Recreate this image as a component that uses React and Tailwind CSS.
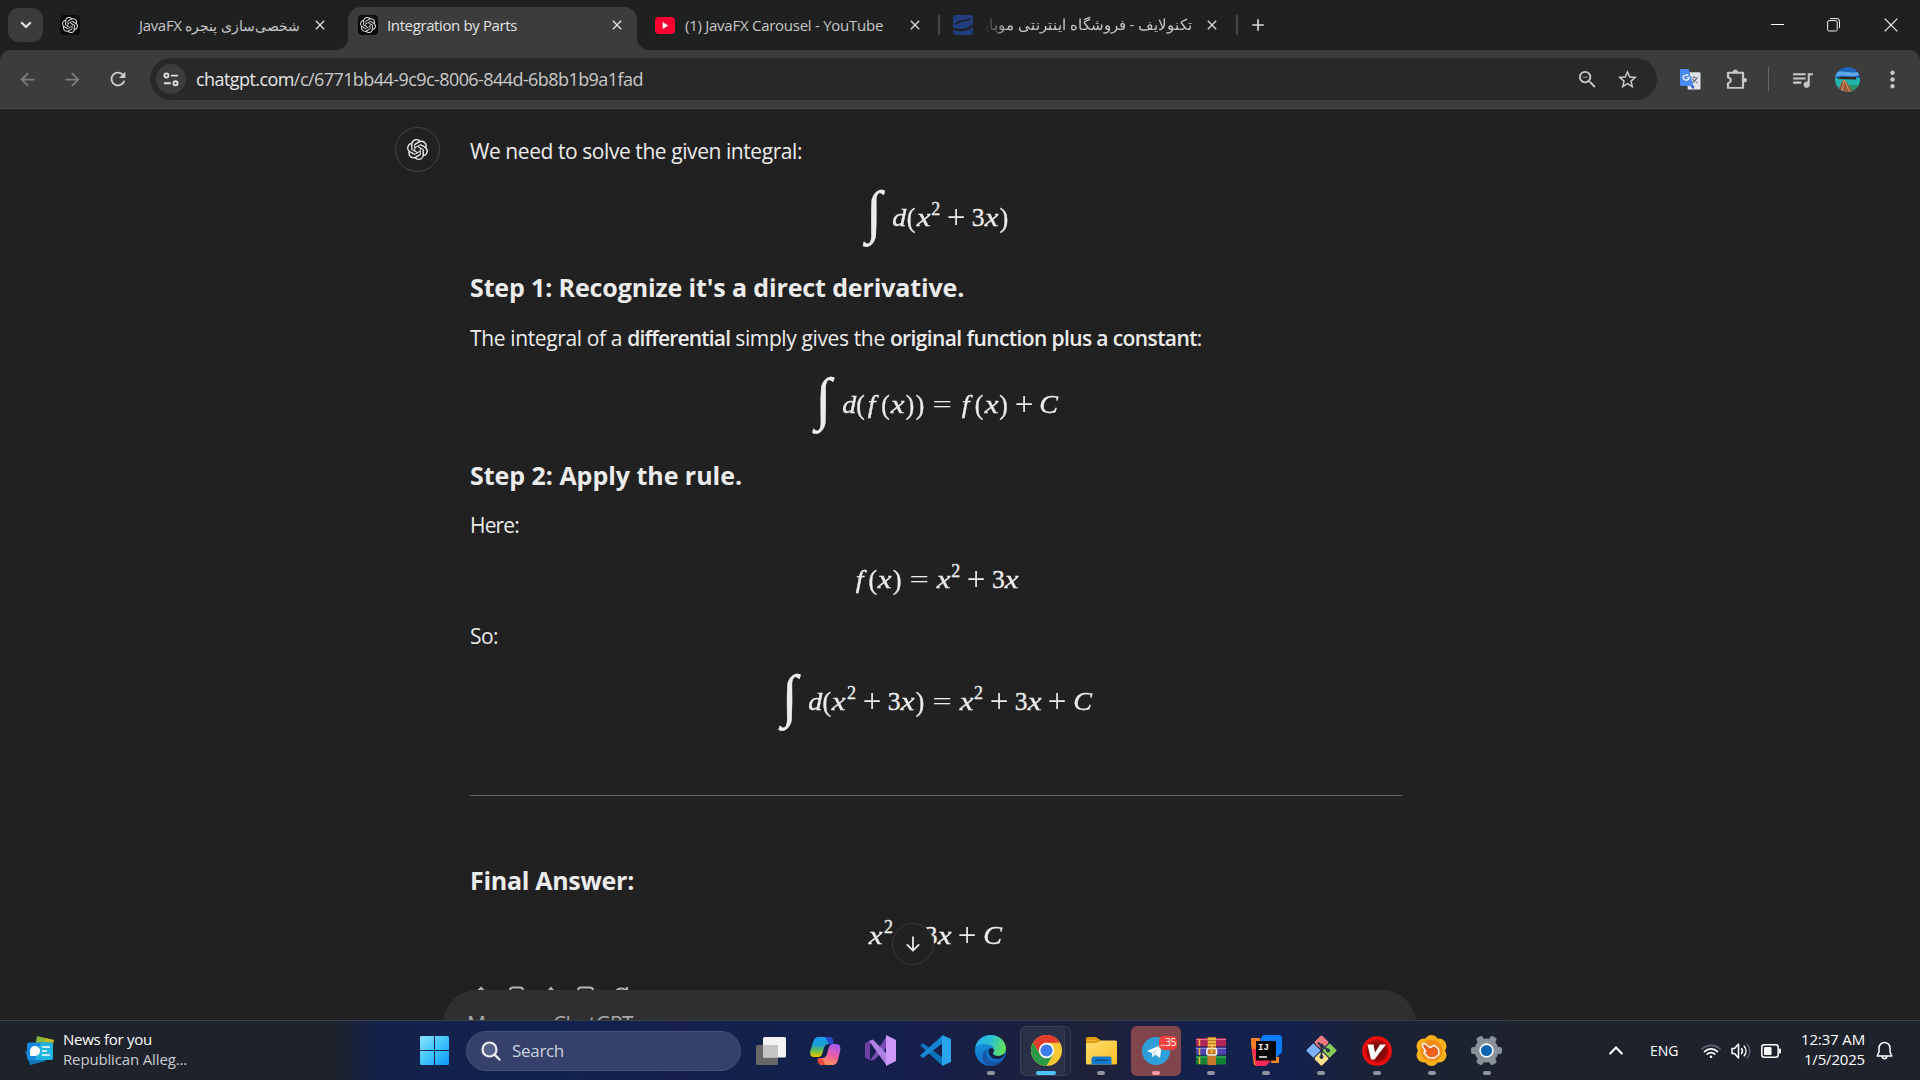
import React from 'react';
import { SiOpenai } from 'react-icons/si';
import {
  MdZoomOut, MdStarOutline, MdQueueMusic, MdMoreVert,
  MdClose, MdAdd, MdArrowBack, MdArrowForward, MdRefresh,
} from 'react-icons/md';

/* ---------- Math typesetting ---------- */

const GLYPHS = {
  int: { ch: '∫', box: 'w-[29.8px]', cls: 'italic text-[58px] relative -top-[6px] -left-[4px]' },
  d: { ch: 'd', box: 'w-[13.3px]', cls: 'italic scale-x-110' },
  x: { ch: 'x', box: 'w-[14.6px]', cls: 'italic scale-x-[1.22]' },
  f: { ch: 'f', box: 'w-[15.2px]', cls: 'italic scale-x-110 relative -left-[1px]' },
  C: { ch: 'C', box: 'w-[20px]', cls: 'italic scale-x-110 relative -left-[1px]' },
  '(': { ch: '(', box: 'w-[9.9px]', cls: 'scale-y-110' },
  ')': { ch: ')', box: 'w-[9.9px]', cls: 'scale-y-110' },
  3: { ch: '3', box: 'w-[12.75px]', cls: '' },
  '+': { ch: '+', box: 'w-[31.1px]', cls: 'scale-[1.3] [-webkit-text-stroke:0]' },
  '=': { ch: '=', box: 'w-[34px]', cls: 'scale-x-[1.35] [-webkit-text-stroke:0]' },
  sq: { ch: '2', box: 'w-[10.2px]', cls: 'text-[18px] relative -top-[9px]' },
};

function Formula({ tokens, className }) {
  return (
    <div className={`flex w-full items-center justify-center font-['Liberation_Serif',serif] text-[25.5px] leading-none [-webkit-text-stroke:0.35px_#ececec] ${className}`}>
      {tokens.split(' ').map((t, i) => (
        <span key={i} className={`flex h-8 items-center justify-center ${GLYPHS[t].box}`}>
          <span className={`block ${GLYPHS[t].cls}`}>{GLYPHS[t].ch}</span>
        </span>
      ))}
    </div>
  );
}

/* ---------- Tab strip ---------- */

function GptFavicon() {
  return (
    <span className="flex h-5 w-5 shrink-0 items-center justify-center rounded-[4px] bg-[#0b0b0b] text-[#d6d6d6]">
      <SiOpenai size={16} />
    </span>
  );
}

function TabStrip() {
  return (
    <div className="flex h-[50px] items-end bg-[#1f2120] text-[15px] text-[#c7c7c7]">
      <div className="flex h-[50px] w-[348px] items-center pl-2">
        <button className="flex h-[34px] w-[35px] items-center justify-center rounded-[11px] bg-[#3a3b3a]">
          <svg width="12" height="8" viewBox="0 0 12 8" fill="none" stroke="#e6e6e6" strokeWidth="2.2"><path d="M1.2 1.3 6 6l4.8-4.7" /></svg>
        </button>
        <span className="ml-[17px]"><GptFavicon /></span>
        <span dir="rtl" className="ml-[26px] w-[194px] whitespace-nowrap text-[14px]">شخصی‌سازی پنجره <span className="text-[15px] tracking-[-0.3px]">JavaFX</span></span>
        <MdClose className="ml-[12px] text-[#d8d8d8]" size={16} />
      </div>
      <div className="relative flex h-[43px] w-[289px] items-center rounded-t-[13px] bg-[#3c3c3c] pb-[7px] pl-[10px] text-[#e3e3e3]">
        <svg className="absolute bottom-0 -left-3" width="12" height="12"><path d="M12 0v12H0A12 12 0 0 0 12 0Z" fill="#3c3c3c" /></svg>
        <svg className="absolute bottom-0 -right-3" width="12" height="12"><path d="M0 0v12h12A12 12 0 0 1 0 0Z" fill="#3c3c3c" /></svg>
        <GptFavicon />
        <span className="ml-[9px] w-[222px] whitespace-nowrap tracking-[-0.38px]">Integration by Parts</span>
        <MdClose size={16} />
      </div>
      <div className="flex h-[50px] flex-1 items-center pl-[18px]">
        <svg width="20" height="17" viewBox="0 0 20 17"><rect width="20" height="17" rx="4" fill="#ff0033" /><path d="M7.7 5v7l5.6-3.5Z" fill="#fff" /></svg>
        <span className="ml-[10px] w-[222px] whitespace-nowrap tracking-[-0.26px]">(1) JavaFX Carousel - YouTube</span>
        <MdClose size={16} className="text-[#d8d8d8]" />
        <span className="ml-[15px] h-5 w-[2px] bg-[#454645]" />
        <svg className="ml-[13px]" width="20" height="20" viewBox="0 0 20 20">
          <rect width="20" height="20" rx="3" fill="#213d7d" />
          <path d="M3.5 8.8C5 5.6 10 6.6 17 4" fill="none" stroke="#1f2120" strokeWidth="1.8" />
          <path d="M0 13.5c6 2.8 14 2.4 20-3.2" fill="none" stroke="#1f2120" strokeWidth="2.2" />
        </svg>
        <span dir="rtl" className="ml-[11px] w-[208px] overflow-hidden whitespace-nowrap text-[14.5px] [mask-image:linear-gradient(to_right,transparent,black_24px)]">تکنولایف - فروشگاه اینترنتی موبایل</span>
        <MdClose size={16} className="ml-[12px] text-[#d8d8d8]" />
        <span className="ml-[16px] h-5 w-[2px] bg-[#454645]" />
        <MdAdd size={20} className="ml-[10px] text-[#d8d8d8]" />
        <div className="ml-auto flex items-center pr-[22px] text-white">
          <svg width="13" height="14"><path d="M0 6.5h13" stroke="#fff" /></svg>
          <svg className="ml-[43px]" width="13" height="14" viewBox="0 0 13 14" fill="none" stroke="#f2f2f2"><rect x=".6" y="2.6" width="9.6" height="10.4" rx="1.6" /><path d="M3 .6h7a2.5 2.5 0 0 1 2.5 2.5V10" /></svg>
          <svg className="ml-[44px]" width="14" height="14" viewBox="0 0 14 14" stroke="#f2f2f2" strokeWidth="1.2"><path d="m.7.7 12.6 12.6M13.3.7.7 13.3" /></svg>
        </div>
      </div>
    </div>
  );
}

/* ---------- Address bar ---------- */

function Toolbar() {
  return (
    <div className="bg-[#1f2120]">
      <div className="flex h-[59px] items-center rounded-t-[10px] border-b border-[#4a4a4a] bg-[#3c3c3c] text-[#c7c7c7]">
        <MdArrowBack size={21} className="ml-[17px] text-[#7d7d7d]" />
        <MdArrowForward size={21} className="ml-[24px] text-[#7d7d7d]" />
        <MdRefresh size={22} className="ml-[24px] text-[#d0d0d0]" />
        <div className="ml-[21px] flex h-[42px] w-[1507px] items-center rounded-full bg-[#282828] pl-[6px]">
          <span className="flex h-[30px] w-[30px] items-center justify-center rounded-full bg-[#3c3c3c]">
            <svg width="16" height="15" viewBox="0 0 17 16" fill="none" stroke="#dedede" strokeWidth="2"><circle cx="3.6" cy="3.8" r="2.2" /><path d="M8.5 3.8H16M1 12h7.2" /><circle cx="13.3" cy="12" r="2.2" /></svg>
          </span>
          <span className="ml-[10px] flex-1 text-[18px] tracking-[-0.57px] text-[#c9c9c9]"><span className="text-[#e8e8e8]">chatgpt.com</span>/c/6771bb44-9c9c-8006-844d-6b8b1b9a1fad</span>
          <MdZoomOut size={23} />
          <MdStarOutline size={23} className="mr-[18px] ml-[17px]" />
        </div>
        <svg className="ml-[23px]" width="21" height="21" viewBox="0 0 22 26" preserveAspectRatio="none">
          <rect x="8" y="4" width="13.500" height="21.500" rx="1.5" fill="#dfe3e8" />
          <path d="M11.5 11h7M15 9v2M17.5 11c-.7 3-2.8 5-5 6M13 12.500c1 2 3 3.500 5 4.500" fill="none" stroke="#5f6b78" strokeWidth="1.2" />
          <path d="M1.5 0H9l5 21H1.500A1.500 1.500 0 0 1 0 19.500v-18A1.500 1.500 0 0 1 1.500 0Z" fill="#4a8af4" />
          <path d="m11 21 3 4 1-4Z" fill="#2d50c8" />
          <path d="M8.800 8.300a3.200 3.200 0 1 0 .9 2.500H6.800" fill="none" stroke="#fff" strokeWidth="1.400" />
        </svg>
        <svg className="ml-[25px]" width="21" height="21" viewBox="0 0 21 25" preserveAspectRatio="none" fill="none" stroke="#c7c7c7" strokeWidth="2.200" strokeLinejoin="round"><path d="M2 4.500h15v18H2V17c3.600-.8 3.600-6.200 0-7Z" /><path d="M7 3.500a2.300 2.300 0 0 1 4.600 0ZM18.500 11a2 2 0 0 1 0 4.500Z" fill="#c7c7c7" strokeWidth="1" /></svg>
        <span className="ml-[21px] h-6 w-px bg-[#666]" />
        <MdQueueMusic size={25} className="ml-[21px]" />
        <svg className="ml-[20px]" width="25" height="25" viewBox="0 0 25 25">
          <defs><clipPath id="av"><circle cx="12.500" cy="12.500" r="12.500" /></clipPath></defs>
          <g clipPath="url(#av)">
            <rect width="25" height="12" fill="#1d63b8" />
            <path d="M0 6c8-4 16 2 25-2v4C16 11 8 7 0 10Z" fill="#5ba6e6" />
            <rect y="11" width="25" height="14" fill="#22b3ad" />
            <path d="M13 18h12v7H13Z" fill="#2e8f68" />
            <path d="M2 12c3-2 6-2.500 9-2h10v2.500Z" fill="#33281f" />
            <path d="M8 13 2 25h16L10 13Z" fill="#9a5a35" />
            <path d="m9 13-2 12M9.500 13l5 12" stroke="#e0b48c" strokeWidth=".7" />
          </g>
        </svg>
        <MdMoreVert size={27} className="ml-[19px]" />
      </div>
    </div>
  );
}

/* ---------- Conversation ---------- */

const BODY = 'whitespace-nowrap text-[21px] leading-7';
const HEAD = 'whitespace-nowrap text-[25px] font-bold leading-8';

function Conversation() {
  return (
    <main className="relative h-[911px] overflow-hidden bg-[#212121] text-[#ececec]">
      <div className="flex pt-[18px] pl-[395px]">
        <div className="flex h-[45px] w-[45px] shrink-0 items-center justify-center rounded-full border border-[#424242] pr-px">
          <SiOpenai size={21} />
        </div>
        <div className="ml-[30px] flex w-[932px] flex-col pt-[10px]">
          <p className={`${BODY} tracking-[-0.43px]`}>We need to solve the given integral:</p>
          <Formula className="mt-[25px] h-14" tokens="int d ( x sq + 3 x )" />
          <h3 className={`${HEAD} mt-[25px] tracking-[-0.13px]`}>Step 1: Recognize it's a direct derivative.</h3>
          <p className={`${BODY} mt-[21px] tracking-[-0.37px]`}>
            The integral of a <b className="font-semibold tracking-[-0.83px]">differential</b> simply gives the <b className="font-semibold tracking-[-0.61px]">original function plus a constant</b>:
          </p>
          <Formula className="mt-[25px] h-14" tokens="int d ( f ( x ) ) = f ( x ) + C" />
          <h3 className={`${HEAD} mt-[26px] tracking-[-0.03px]`}>Step 2: Apply the rule.</h3>
          <p className={`${BODY} mt-[20px] tracking-[-0.83px]`}>Here:</p>
          <Formula className="mt-[25px] h-8" tokens="f ( x ) = x sq + 3 x" />
          <p className={`${BODY} mt-[26px] tracking-[-0.56px]`}>So:</p>
          <Formula className="mt-[24px] h-14" tokens="int d ( x sq + 3 x ) = x sq + 3 x + C" />
          <hr className="mt-[65px] border-[#666]" />
          <h3 className={`${HEAD} mt-[68px] tracking-[-0.29px]`}>Final Answer:</h3>
          <Formula className="mt-[24px] h-8" tokens="x sq + 3 x + C" />
          <div className="mt-[34px] flex gap-[14px] pl-[1px] text-[#b4b4b4]">
            <svg width="20" height="22" viewBox="0 0 20 22" fill="none" stroke="currentColor" strokeWidth="2"><path d="M4 8 10 2l6 6v10H4Z" /></svg>
            <svg width="22" height="22" viewBox="0 0 22 22" fill="none" stroke="currentColor" strokeWidth="2"><rect x="5" y="1.500" width="13" height="16" rx="3" /></svg>
            <svg width="20" height="22" viewBox="0 0 20 22" fill="none" stroke="currentColor" strokeWidth="2"><path d="M4 9 10 2l6 7v9H4Z" /></svg>
            <svg width="22" height="22" viewBox="0 0 22 22" fill="none" stroke="currentColor" strokeWidth="2"><rect x="3" y="1.500" width="15" height="16" rx="3" /></svg>
            <svg width="22" height="22" viewBox="0 0 22 22" fill="none" stroke="currentColor" strokeWidth="2"><path d="M4 7a7 7 0 0 1 12-2V1" /></svg>
          </div>
        </div>
      </div>
      <button className="absolute top-[814px] left-[892px] flex h-[42px] w-[42px] items-center justify-center rounded-full border border-[#383838] bg-[#212121]">
        <svg width="14" height="16" viewBox="0 0 16 18" fill="none" stroke="#ececec" strokeWidth="2" strokeLinecap="round" strokeLinejoin="round"><path d="M8 1v15M1.500 10 8 16.500l6.500-6.500" /></svg>
      </button>
      <div className="absolute top-[881px] left-[443px] h-[60px] w-[973px] rounded-t-[34px] bg-[#2f2f2f] pt-[20px] pl-[24px] text-[21px] leading-7 tracking-[-0.65px] text-[#a8a8a8]">Message ChatGPT</div>
    </main>
  );
}

/* ---------- Taskbar icons ---------- */

const TaskView = () => (
  <svg width="30" height="30" viewBox="0 0 30 30"><rect x="0" y="9" width="22" height="20" rx="1.500" fill="#686868" /><rect x="7" y="1" width="23" height="20.500" rx="1.500" fill="#f4f4f4" /><path d="M7 9h15v12.500H8.500A1.500 1.500 0 0 1 7 20Z" fill="#c4c4c4" /></svg>
);
const Copilot = () => (
  <svg width="31" height="30" viewBox="0 0 31 30">
    <defs>
      <linearGradient id="cp1" x1="0" y1="0" x2="0" y2="1"><stop offset="0" stopColor="#1a9cf0" /><stop offset=".4" stopColor="#1d9fd0" /><stop offset=".7" stopColor="#6cc24a" /><stop offset="1" stopColor="#f5c400" /></linearGradient>
      <linearGradient id="cp2" x1=".6" y1="0" x2=".3" y2="1"><stop offset="0" stopColor="#a85cf2" /><stop offset=".5" stopColor="#ee5ba0" /><stop offset="1" stopColor="#ff9b4a" /></linearGradient>
    </defs>
    <path d="M9 1h10c3 0 3.500 2 4.500 6l-4 1c-4 0-5 2-6 6-1 4-2 7-5 7H4C0 21-.5 18 .6 14L3 6C4 3 5.500 1 9 1Z" fill="url(#cp1)" />
    <path d="M14 1h5.500c3 0 3 2.500 4.500 7h-4c-2.500 0-3-7-6-7Z" fill="#2349c8" />
    <path d="M22 29H12c-3 0-3.500-2-4.500-6l4-1c4 0 5-2 6-6 1-4 2-8 5-8h4c4 0 4.500 4 3.400 8L28 24c-1 3-2.500 5-6 5Z" fill="url(#cp2)" />
    <path d="M17 29h-5c-3 0-3.500-2.500-4.500-6.500H11c3 0 3 6.500 6 6.500Z" fill="#ef4a3c" />
    <path d="M14.500 11.500h4l-2.500 7h-4Z" fill="#14204c" />
  </svg>
);
const VisualStudio = () => (
  <svg width="31" height="31" viewBox="0 0 31 31">
    <path d="M0 8.500 5 5.500v20L0 22.500Z" fill="#6d3fa0" />
    <path d="m5 25.500 4-.5L22 12V1Z" fill="#7b4bb3" />
    <path d="m4 6 4-1.500L22 19v12Z" fill="#ad80e4" />
    <path d="m21 0 10 5v21l-10 5Z" fill="#cf97fa" />
  </svg>
);
const VSCode = () => (
  <svg width="31" height="31" viewBox="0 0 31 31"><path d="M0 10.500 3 8l20 15v8Z" fill="#0b72b9" /><path d="M0 20.500 3 23 23 8V0Z" fill="#1487d0" /><path d="m22 0 9 4v23l-9 4Z" fill="#29a5ee" /></svg>
);
const Edge = () => (
  <svg width="31" height="31" viewBox="0 0 31 31">
    <defs>
      <linearGradient id="eg1" x1="0" y1=".3" x2="1" y2=".5"><stop offset="0" stopColor="#26a9e8" /><stop offset=".5" stopColor="#2bc3d2" /><stop offset="1" stopColor="#66e14d" /></linearGradient>
      <linearGradient id="eg2" x1="0" y1="0" x2=".4" y2="1"><stop offset="0" stopColor="#1ba0e2" /><stop offset="1" stopColor="#0f68c4" /></linearGradient>
    </defs>
    <circle cx="15.500" cy="15.500" r="15.500" fill="url(#eg2)" />
    <path d="M.3 13C1.500 5 8 0 15.500 0 25 0 31 7 31 13.500c0 4.500-3.500 7.500-8 7.500-3 0-5-1-5-2.500 0-1 1-1.500 1-3.500C19 12 15 9 10.500 9 5 9 1 11 .3 13Z" fill="url(#eg1)" />
    <path d="M12.500 14c-3 4-1 13 7 13 4 0 7-2 9-4-3 5-8 8-13 8-5-1-9-6-8-11 .5-3 3-5 5-6Z" fill="#1456a4" />
    <path d="M19 15c0 2-1 2.500-1 3.500 0 1.500 2 2.500 5 2.500 3 0 5-1 7-3-1 4-4 6-8 6-6 0-10-5-8-10 1-1 5-1 5 1Z" fill="#182043" />
  </svg>
);
const Chrome = () => (
  <svg width="31" height="31" viewBox="0 0 31 31">
    <circle cx="15.500" cy="15.500" r="15.500" fill="#fcc934" />
    <path d="M15.500 0A15.500 15.500 0 0 1 28.900 7.700H15.500L9 19.500 2 7.800A15.500 15.500 0 0 1 15.500 0Z" fill="#e33b2e" />
    <path d="M2.100 7.750A15.500 15.500 0 0 0 15.500 31l6.700-11.600H9Z" fill="#2a9a48" />
    <circle cx="15.500" cy="15.500" r="7.700" fill="#fff" /><circle cx="15.500" cy="15.500" r="6.100" fill="#3b7ded" />
  </svg>
);
const Explorer = () => (
  <svg width="31" height="29" viewBox="0 0 31 29">
    <defs><linearGradient id="fx" x1="0" y1="0" x2="1" y2="1"><stop offset="0" stopColor="#ffdd70" /><stop offset="1" stopColor="#fbbf26" /></linearGradient></defs>
    <path d="M0 3a2 2 0 0 1 2-2h8l4 3v6H0Z" fill="#e09d0c" /><rect y="4.500" width="31" height="24" rx="1.500" fill="url(#fx)" /><path d="M0 6h10l4-2" fill="none" stroke="#e09d0c" strokeWidth="2" />
    <path d="M5.500 28.500V23a2.500 2.500 0 0 1 2.500-2.500h15a2.500 2.500 0 0 1 2.500 2.500v5.500Z" fill="#1379cd" /><path d="M9 24.300h13" stroke="#0c4a83" strokeWidth="1.300" />
  </svg>
);
const Telegram = () => (
  <div className="relative flex h-[50px] w-[50px] items-center justify-center rounded-[6px] bg-[#80464c]">
    <svg width="28" height="28" viewBox="0 0 28 28"><circle cx="14" cy="14" r="14" fill="#2f9fd9" /><path d="m5 14 15-6.500L18 21l-5-3.500-2.500 3-.6-4.500Z" fill="#fff" /><path d="m10 16 7-5.500-5 6.500" fill="#b9d8ea" /></svg>
    <span className="absolute top-[10px] right-[4px] flex h-[14px] w-[18px] items-center justify-center rounded-[5px] bg-[#f4403c] text-[10.500px] leading-none tracking-[-0.4px] text-white">..35</span>
  </div>
);
const WinRar = () => (
  <svg width="30" height="28" viewBox="0 0 30 28">
    <rect y="1" width="30" height="9" rx="1" fill="#b3265a" /><rect y="10" width="30" height="8.500" rx="1" fill="#4d44ae" /><rect y="18.500" width="30" height="9" rx="1" fill="#138036" />
    <path d="M0 2.500h30" stroke="#dc6f94" /><path d="M0 11.500h30" stroke="#8f88dd" /><path d="M0 20h30" stroke="#3fb964" />
    <path d="M0 9.800h30M0 18.200h30" stroke="#1c2348" strokeWidth=".8" />
    <path d="M3.500 2v7M3.500 11v7M3.500 20v7" stroke="#e8bd3a" strokeWidth="1.500" />
    <rect x="11.500" y="0" width="8.500" height="28" fill="#c7792a" /><path d="M12 2h8M12 5h8M12 8h8" stroke="#f4cd52" strokeWidth="1.500" />
    <rect x="11" y="11.500" width="9.500" height="6.500" rx="1.500" fill="none" stroke="#ececec" strokeWidth="1.700" /><path d="M15.700 9v7" stroke="#f4cd52" strokeWidth="1.500" />
  </svg>
);
const IntelliJ = () => (
  <svg width="31" height="31" viewBox="0 0 31 31">
    <path d="M0 3h9v12L7 31l-4-1L0 9Z" fill="#fb7e27" /><path d="M12 0h16a3 3 0 0 1 3 3v14l-5 5H9V5Z" fill="#087cfa" /><path d="M1 14h10l10 10-6 7H5Z" fill="#fe2857" /><path d="M21 22h7v6h-8Z" fill="#fd8a22" />
    <rect x="5" y="6" width="20" height="19.500" fill="#000" />
    <text x="7" y="15" fill="#fff" fontSize="9" fontWeight="700" fontFamily="Liberation Mono, monospace">IJ</text><path d="M8 22h8" stroke="#fff" strokeWidth="1.500" />
  </svg>
);
const Git = () => (
  <svg width="31" height="31" viewBox="0 0 31 31">
    <g transform="rotate(45 15.500 15.500)"><rect x="4.500" y="4.500" width="10.500" height="10.500" rx="1.500" fill="#f27a80" /><rect x="16" y="4.500" width="10.500" height="10.500" rx="1.500" fill="#86cb57" /><rect x="16" y="16" width="10.500" height="10.500" rx="1.500" fill="#ffe08a" /><rect x="4.500" y="16" width="10.500" height="10.500" rx="1.500" fill="#7cb1fa" /></g>
    <path d="M12 7.500 15.500 11v12M15.500 10.500l7 5" stroke="#23304a" strokeWidth="1.800" fill="none" /><circle cx="15.500" cy="10.500" r="2" fill="#23304a" /><circle cx="22" cy="15.500" r="2" fill="#23304a" /><circle cx="15.500" cy="22" r="2" fill="#23304a" />
  </svg>
);
const RedV = () => (
  <svg width="30" height="30" viewBox="0 0 30 30">
    <defs><radialGradient id="rv"><stop offset="0" stopColor="#5c0404" /><stop offset=".65" stopColor="#9a0808" /><stop offset=".85" stopColor="#f20c0c" /><stop offset="1" stopColor="#ff1010" /></radialGradient></defs>
    <circle cx="15" cy="15" r="14.800" fill="url(#rv)" /><path d="M5.500 8.500h6l1.500 8 5-8h6L12.500 23.500H9Z" fill="#fff" />
  </svg>
);
const HandApp = () => (
  <svg width="31" height="31" viewBox="0 0 31 31">
    <g fill="#fbb117"><circle cx="15.500" cy="7" r="7" /><circle cx="8" cy="11" r="7.500" /><circle cx="23" cy="11" r="7.500" /><circle cx="8" cy="20" r="7.500" /><circle cx="23" cy="20" r="7.500" /><circle cx="15.500" cy="24" r="7" /></g>
    <circle cx="15.500" cy="15.500" r="11" fill="#f88d18" />
    <path d="M6.800 9.300c1-1 2.200-.7 3 0l4 3.200 4.500-2 4.200 3.500.5 5.500-5 3.500-5.500-.5-4.500-4.500c0-1 .8-1.600 1.800-1.300L6.800 11.500c-.7-.7-.7-1.600 0-2.200Z" fill="#ee5f1e" stroke="#fff" strokeWidth="1.400" strokeLinejoin="round" />
  </svg>
);
const Settings = () => (
  <svg width="31" height="31" viewBox="0 0 31 31">
    <g fill="#88919a"><circle cx="15.500" cy="15.500" r="12" />{[30, 90, 150].map((a) => <rect key={a} x="12" y="0" width="7" height="31" rx="2" transform={`rotate(${a} 15.500 15.500)`} />)}</g>
    <circle cx="15.500" cy="15.500" r="7.200" fill="#fff" /><circle cx="15.500" cy="15.500" r="5.600" fill="#0d64b4" />
  </svg>
);

const APPS = [
  { I: TaskView }, { I: Copilot }, { I: VisualStudio }, { I: VSCode },
  { I: Edge, dot: true }, { I: Chrome, active: true }, { I: Explorer, dot: true }, { I: Telegram, dot: true, pink: true },
  { I: WinRar, dot: true }, { I: IntelliJ, dot: true }, { I: Git, dot: true }, { I: RedV, dot: true }, { I: HandApp, dot: true }, { I: Settings, dot: true },
];

function AppCell({ app }) {
  const { I, dot, active, pink } = app;
  return (
    <div className="relative flex h-[60px] w-[55.1px] shrink-0 items-center justify-center">
      {active && <span className="absolute top-[5px] left-[5px] h-[50px] w-[48px] rounded-[6px] border border-[#383c52] bg-[#23273f]" />}
      {active && <span className="absolute top-[5px] left-[2px] h-[50px] w-[45px] rounded-[6px] border border-[#3b3f55] bg-[#2c3047]" />}
      <span className="relative"><I /></span>
      {dot && <span className={`absolute bottom-[6px] h-1 w-2 rounded-full ${pink ? 'bg-[#ff99a4]' : 'bg-[#9094a0]'}`} />}
      {active && <span className="absolute bottom-[6px] left-[18px] h-1 w-5 rounded-full bg-[#4cc2ff]" />}
    </div>
  );
}

function Taskbar() {
  return (
    <footer className="flex h-[60px] items-center border-t border-[#3b4050] bg-[linear-gradient(90deg,#1e222b_0,#1e222b_330px,#12224b_385px,#12224f_560px,#161f4d_680px,#12224b_760px,#151f4e_900px,#1a2040_1000px,#1e2138_1100px,#14214d_1200px,#14214d_1290px,#1b2235_1370px,#1d222d_1520px,#1e222b_1920px)] text-[15px] text-white">
      <div className="flex w-[420px] items-center pl-[25px]">
        <svg width="30" height="30" viewBox="0 0 30 30">
          <path d="m12 0 17 4-4 17L9 16Z" fill="#8cb43c" /><path d="m20 2 9 2-3 9-6-6Z" fill="#c7b71f" />
          <path d="m0 15 20 6 1 4-16 4Z" fill="#0f78b8" />
          <rect x="2" y="6.500" width="26" height="17.500" rx="2" fill="#1589df" /><path d="M16 6.500h10a2 2 0 0 1 2 2V22a2 2 0 0 1-2 2H10Z" fill="#1fb4e0" />
          <circle cx="10" cy="15" r="5" fill="#fff" /><path d="M5 20v-5h5v5Z" fill="#fff" /><path d="M17 11h8M17 15h5M17 19h8" stroke="#fff" strokeWidth="1.500" />
        </svg>
        <div className="ml-[8px] flex flex-col pb-[3px] leading-5">
          <span className="tracking-[-0.27px]">News for you</span>
          <span className="tracking-[-0.15px] text-[#c9cbd0]">Republican Alleg...</span>
        </div>
      </div>
      <svg width="29" height="29" viewBox="0 0 29 29">
        <defs><linearGradient id="wn" gradientUnits="userSpaceOnUse" x1="0" y1="0" x2="29" y2="29"><stop stopColor="#85e1fc" /><stop offset=".5" stopColor="#41c5fb" /><stop offset="1" stopColor="#0c98fb" /></linearGradient></defs>
        <path d="M1 0h13v14H0V1ZM15 0h13l1 1v13H15ZM0 15h14v14H1l-1-1ZM15 15h14v13l-1 1H15Z" fill="url(#wn)" />
      </svg>
      <div className="ml-[17px] flex h-10 w-[275px] items-center rounded-full border border-[#45517a] bg-[#35416b] pl-[14px] text-[#cdd1df]">
        <svg width="20" height="20" viewBox="0 0 20 20" fill="none" stroke="#ececf0" strokeWidth="2.200" strokeLinecap="round"><circle cx="8.500" cy="8.500" r="7" fill="#56618a" /><path d="m13.600 13.600 5 5" /></svg>
        <span className="ml-[11px] text-[17px] tracking-[-0.31px]">Search</span>
      </div>
      <div className="ml-[2px] flex">{APPS.map((a, i) => <AppCell key={i} app={a} />)}</div>
      <div className="ml-auto flex items-center pr-[27px]">
        <svg width="14" height="9" viewBox="0 0 14 9" fill="none" stroke="#fff" strokeWidth="2" strokeLinecap="round"><path d="m1.200 7.500 5.800-6 5.800 6" /></svg>
        <span className="ml-[27px] w-[29px] text-[14px]">ENG</span>
        <svg className="ml-[22px]" width="20" height="16" viewBox="0 0 20 16" fill="none" stroke="#fff" strokeWidth="1.700" strokeLinecap="round"><path d="M1 6.200a12.500 12.500 0 0 1 18 0" stroke="#596070" /><path d="M3.500 8.600a9 9 0 0 1 13 0M6.200 11.200a5.300 5.300 0 0 1 7.600 0" /><circle cx="10" cy="13.800" r="1.300" fill="#fff" stroke="none" /></svg>
        <svg className="ml-[10px]" width="20" height="18" viewBox="0 0 20 18" fill="none" stroke="#fff" strokeWidth="1.500" strokeLinecap="round" strokeLinejoin="round"><path d="M1 6.500h2.500L7.500 2v14l-4-4.500H1ZM10.500 6.500a4 4 0 0 1 0 5M13.200 4.200a7.500 7.500 0 0 1 0 9.600" /><path d="M16 2a10 10 0 0 1 0 14" stroke="#596070" /></svg>
        <svg className="ml-[10px]" width="20" height="14" viewBox="0 0 20 14"><rect x=".8" y=".8" width="16.400" height="12.400" rx="2.500" fill="none" stroke="#fff" strokeWidth="1.500" /><rect x="3" y="3" width="7.500" height="8" rx="1" fill="#fff" /><rect x="18" y="4.500" width="2" height="5" rx="1" fill="#fff" /></svg>
        <div className="ml-[19px] flex w-[65px] flex-col items-end pb-[3px] leading-5 whitespace-nowrap"><span className="tracking-[-0.14px]">12:37 AM</span><span className="tracking-[-0.18px]">1/5/2025</span></div>
        <svg className="ml-[11px]" width="17" height="19" viewBox="0 0 17 19" fill="none" stroke="#fff" strokeWidth="1.500" strokeLinejoin="round" strokeLinecap="round"><path d="M3 7a5.500 5.500 0 0 1 11 0v4l1.800 4H1.200L3 11Z" /><path d="M6.300 15.500a2.200 2.200 0 0 0 4.400 0" /></svg>
      </div>
    </footer>
  );
}

export default function App() {
  return (
    <div className="flex h-[1080px] w-[1920px] flex-col overflow-hidden bg-[#212121] font-['Open_Sans','Noto_Sans',sans-serif]">
      <TabStrip />
      <Toolbar />
      <Conversation />
      <Taskbar />
    </div>
  );
}
